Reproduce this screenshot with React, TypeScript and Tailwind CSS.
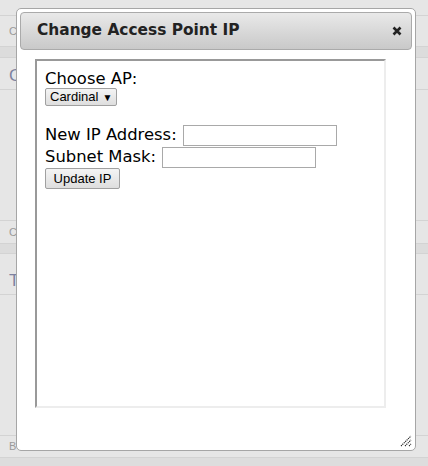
import React from 'react'

const rowLine = 'border-b border-[#d3d3d3]'

function BgRow({ h, label, big, band, pad }: { h: string; label?: string; big?: boolean; band?: boolean; pad?: string }) {
  return (
    <div className={`${h} ${rowLine} ${band ? 'bg-[#dcdcdc]' : ''} flex ${pad ? pad : 'items-center'} pl-[9px]`}>
      {label && (
        <span
          className={
            big
              ? 'text-[17px] leading-[20px] text-[#7d82a0] font-["Liberation_Sans",sans-serif]'
              : 'text-[11px] text-[#9a9a9a] font-["Liberation_Sans",sans-serif]'
          }
        >
          {label}
        </span>
      )}
    </div>
  )
}

function CloseIcon() {
  return (
    <svg width="10" height="10" viewBox="0 0 10 10">
      <path d="M1.5 1.5 L8.5 8.5 M8.5 1.5 L1.5 8.5" stroke="#222" strokeWidth="2.6" strokeLinecap="butt" />
    </svg>
  )
}

function ResizeGrip() {
  return (
    <svg width="12" height="12" viewBox="0 0 12 12">
      <path d="M1 11 L11 1 M5 11 L11 5 M9 11 L11 9" stroke="#222" strokeWidth="1.1" strokeDasharray="1.2 0.8" />
    </svg>
  )
}

export default function App() {
  return (
    <div className="relative w-[428px] h-[466px] overflow-hidden bg-[#e6e6e6]">
      {/* page behind the dialog */}
      <div className="flex flex-col">
        <div className={`h-[16px] ${rowLine}`} />
        <BgRow h="h-[31px]" label="C" />
        <BgRow h="h-[11px]" band />
        <BgRow h="h-[32px]" label="C" big pad="items-start pt-[8px]" />
        <BgRow h="h-[131px]" />
        <BgRow h="h-[23px]" label="C" />
        <BgRow h="h-[10px]" band />
        <BgRow h="h-[41px]" label="T" big pad="items-start pt-[17px]" />
        <BgRow h="h-[141px]" />
        <BgRow h="h-[22px]" label="B" />
        <div className="h-[9px] bg-[#dddddd]" />
      </div>

      {/* dialog */}
      <div className="absolute left-[16px] top-[8px] w-[400px] h-[443px] bg-white border border-[#a6a6a6] rounded-[5px] p-[3px] flex flex-col font-['DejaVu_Sans',sans-serif]">
        <div className="h-[38px] shrink-0 rounded-[4px] border border-[#aaaaaa] bg-gradient-to-b from-[#e9e9e9] to-[#c9c9c9] flex items-center justify-between pl-[16px] pr-[9px]">
          <span className="text-[15.4px] font-bold text-[#222]">Change Access Point IP</span>
          <CloseIcon />
        </div>

        <div className="flex-1 flex flex-col pl-[15px] pt-[9px]">
          <div className="w-[351px] h-[349px] border-2 border-t-[#999999] border-l-[#999999] border-r-[#ededed] border-b-[#ededed] bg-white p-[8px] text-[16.4px] text-black">
            <div className="leading-[19px]">Choose AP:</div>
            <div className="h-[18px] w-[72px] border border-[#a0a0a0] rounded-[2px] bg-gradient-to-b from-[#f4f4f4] to-[#dedede] flex items-center pl-[4px] gap-[4px] text-[13px] font-['Liberation_Sans',sans-serif]">
              <span>Cardinal</span>
              <span className="text-[10px]">▼</span>
            </div>
            <div className="h-[18px]" />
            <div className="flex items-center h-[22px] gap-[6px]">
              <span>New IP Address:</span>
              <div className="w-[154px] h-[21px] border border-[#a9a9a9] bg-white" />
            </div>
            <div className="flex items-center h-[22px] gap-[6px]">
              <span>Subnet Mask:</span>
              <div className="w-[154px] h-[21px] border border-[#a9a9a9] bg-white" />
            </div>
            <div className="h-[21px] w-[75px] border border-[#a0a0a0] rounded-[2px] bg-gradient-to-b from-[#f4f4f4] to-[#dedede] flex items-center justify-center text-[13px] font-['Liberation_Sans',sans-serif]">
              Update IP
            </div>
          </div>
        </div>

        <div className="absolute right-[3px] bottom-[3px]">
          <ResizeGrip />
        </div>
      </div>
    </div>
  )
}
